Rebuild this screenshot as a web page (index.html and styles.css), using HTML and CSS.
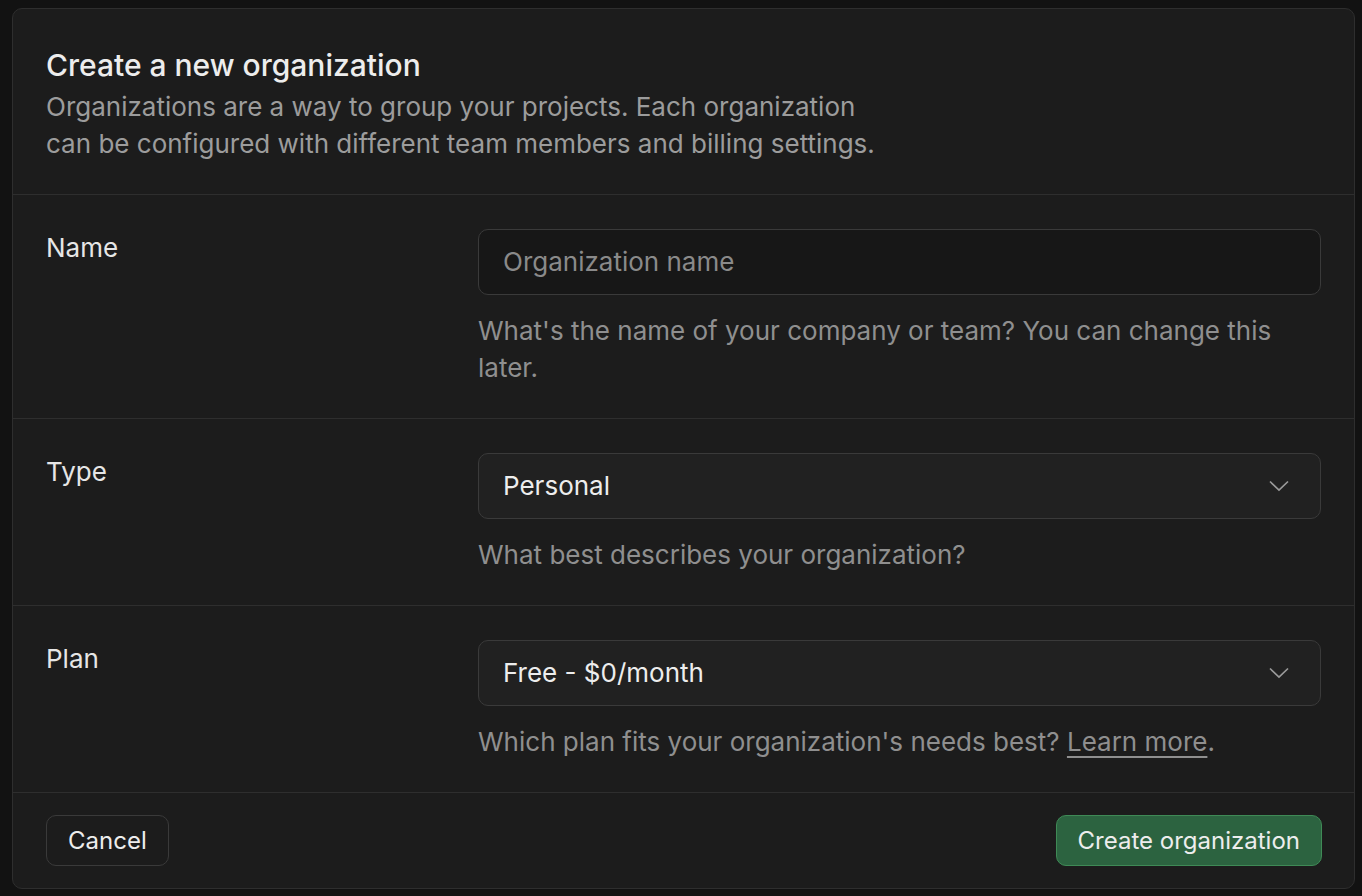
FILE: index.html
```html
<!DOCTYPE html>
<html lang="en">
<head>
    <meta charset="UTF-8">
    <meta name="viewport" content="width=device-width, initial-scale=1.0">
    <title>Create a new organization</title>
    <link rel="stylesheet" href="styles.css">
</head>
<body>
    <div class="panel">
        <div class="panel-header">
            <h2>Create a new organization</h2>
            <p>Organizations are a way to group your projects. Each organization<br>can be configured with different team members and billing settings.</p>
        </div>

        <div class="row">
            <label class="row-label" for="orgName">Name</label>
            <div class="row-field">
                <input type="text" id="orgName" class="text-input" placeholder="Organization name">
                <p class="hint">What's the name of your company or team? You can change this later.</p>
            </div>
        </div>

        <div class="row">
            <label class="row-label">Type</label>
            <div class="row-field">
                <div class="select">
                    <span>Personal</span>
                    <svg class="chevron" viewBox="0 0 20 12" width="20" height="12"><path d="M1 1.5 L10 10 L19 1.5" fill="none" stroke="currentColor" stroke-width="1.7"/></svg>
                </div>
                <p class="hint">What best describes your organization?</p>
            </div>
        </div>

        <div class="row">
            <label class="row-label">Plan</label>
            <div class="row-field">
                <div class="select">
                    <span>Free - $0/month</span>
                    <svg class="chevron" viewBox="0 0 20 12" width="20" height="12"><path d="M1 1.5 L10 10 L19 1.5" fill="none" stroke="currentColor" stroke-width="1.7"/></svg>
                </div>
                <p class="hint">Which plan fits your organization's needs best? <a href="#">Learn more</a>.</p>
            </div>
        </div>

        <div class="panel-footer">
            <button class="btn btn-cancel" type="button">Cancel</button>
            <button class="btn btn-primary" type="button">Create organization</button>
        </div>
    </div>
</body>
</html>
```

FILE: styles.css
```css
body {
    font-family: Inter, "Noto Sans", sans-serif;
    background-color: #121212;
    margin: 0;
    padding: 8px 8px 4px 12px;
    color: #ededed;
}

.panel {
    background-color: #1c1c1c;
    border: 1px solid #2e2e2e;
    border-radius: 10px;
    width: 1341px;
}

.panel-header {
    padding: 36px 33px 32px;
    border-bottom: 1px solid #2e2e2e;
}

h2 {
    margin: 0;
    font-size: 30px;
    font-weight: 500;
    line-height: 40px;
    color: #ededed;
}

.panel-header p {
    margin: 3px 0 0;
    font-size: 26px;
    line-height: 37px;
    color: #9c9c9c;
}

.row {
    display: grid;
    grid-template-columns: 432px 1fr;
    padding: 33.5px 33px 32.5px;
    border-bottom: 1px solid #2e2e2e;
}

.row-label {
    font-size: 26px;
    line-height: 37px;
    color: #e6e6e6;
}

.row-field {
    display: flex;
    flex-direction: column;
    gap: 17px;
}

.text-input,
.select {
    box-sizing: border-box;
    width: 100%;
    height: 66px;
    padding: 0 24px;
    border: 1.5px solid #3a3a3a;
    border-radius: 10px;
    font-family: inherit;
    font-size: 26px;
    color: #ededed;
}

.text-input {
    background-color: #171717;
    outline: none;
}

.text-input::placeholder {
    color: #8a8a8a;
}

.select {
    background-color: #212121;
    display: flex;
    align-items: center;
    justify-content: space-between;
}

.chevron {
    color: #9a9a9a;
    margin-right: 7px;
}

.hint {
    margin: 0;
    font-size: 26px;
    line-height: 37px;
    color: #8f8f8f;
}

.hint a {
    color: #8f8f8f;
    text-decoration: underline;
    text-underline-offset: 5px;
}

.panel-footer {
    display: flex;
    justify-content: space-between;
    padding: 22px 32px 22px 33px;
}

.btn {
    height: 51px;
    padding: 0 21px;
    border-radius: 10px;
    font-family: inherit;
    font-size: 24px;
    cursor: pointer;
}

.btn-cancel {
    background-color: #1c1c1c;
    border: 1.5px solid #3a3a3a;
    color: #ededed;
}

.btn-primary {
    background-color: #2c6340;
    border: 1.5px solid #3f8a56;
    color: #ededed;
}
```
